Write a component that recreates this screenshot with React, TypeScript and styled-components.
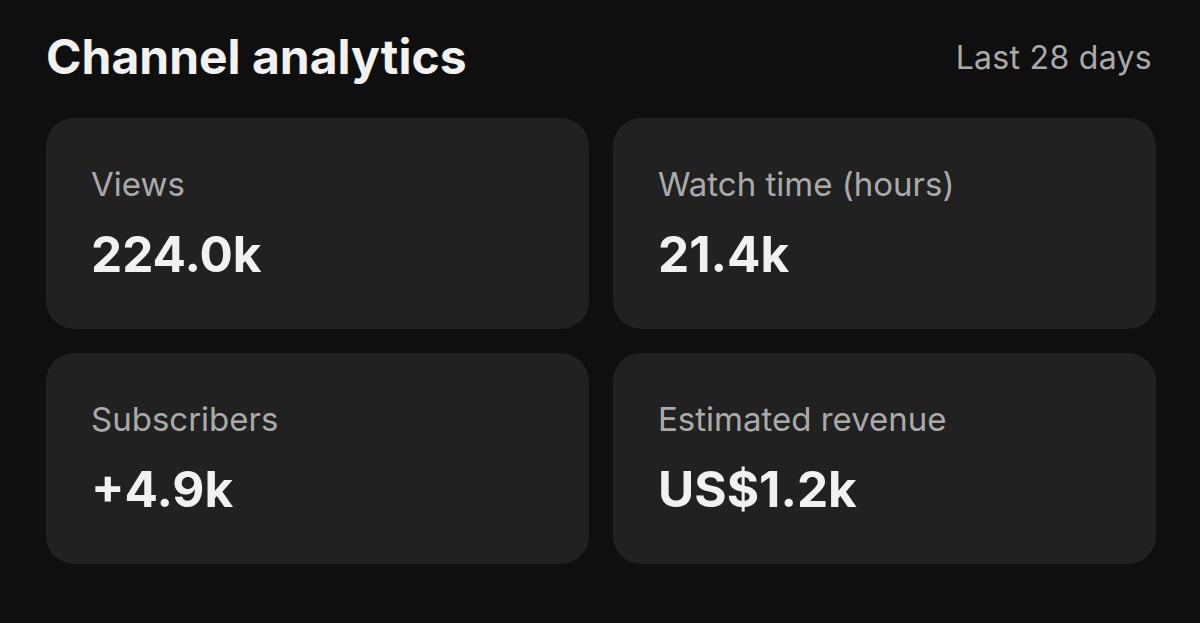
import React from "react";
import styled, { createGlobalStyle } from "styled-components";

const Global = createGlobalStyle`
  html, body { margin: 0; padding: 0; background: #0f0f0f; }
  body { font-family: Inter, "Noto Sans", sans-serif; -webkit-font-smoothing: antialiased; }
`;

const Page = styled.div`
  width: 1200px;
  height: 623px;
  box-sizing: border-box;
  padding: 22px 44px 0 46px;
  background: #0f0f0f;
`;

const Header = styled.header`
  display: flex;
  justify-content: space-between;
  align-items: flex-start;
  height: 96px;
`;

const Title = styled.h1`
  margin: 0;
  font-size: 48px;
  line-height: 70px;
  font-weight: 700;
  color: #f1f1f1;
  letter-spacing: 0;
`;

const Range = styled.span`
  margin-top: 16px;
  margin-right: 4px;
  font-size: 32px;
  line-height: 40px;
  color: #aaaaaa;
  letter-spacing: 0.3px;
`;

const Grid = styled.div`
  display: grid;
  grid-template-columns: 1fr 1fr;
  gap: 24px;
`;

const Card = styled.div`
  background: #212121;
  border-radius: 28px;
  height: 211px;
  box-sizing: border-box;
  padding: 46px 45px 0;
  display: flex;
  flex-direction: column;
`;

const Label = styled.div`
  font-size: 33px;
  line-height: 40px;
  color: #aaaaaa;
`;

const Value = styled.div`
  margin-top: 20px;
  font-size: 49.5px;
  line-height: 60px;
  font-weight: 700;
  color: #f1f1f1;
`;

const stats = [
  { label: "Views", value: "224.0k" },
  { label: "Watch time (hours)", value: "21.4k" },
  { label: "Subscribers", value: "+4.9k" },
  { label: "Estimated revenue", value: "US$1.2k" },
];

export default function App() {
  return (
    <Page>
      <Global />
      <Header>
        <Title>Channel analytics</Title>
        <Range>Last 28 days</Range>
      </Header>
      <Grid>
        {stats.map((s) => (
          <Card key={s.label}>
            <Label>{s.label}</Label>
            <Value>{s.value}</Value>
          </Card>
        ))}
      </Grid>
    </Page>
  );
}
